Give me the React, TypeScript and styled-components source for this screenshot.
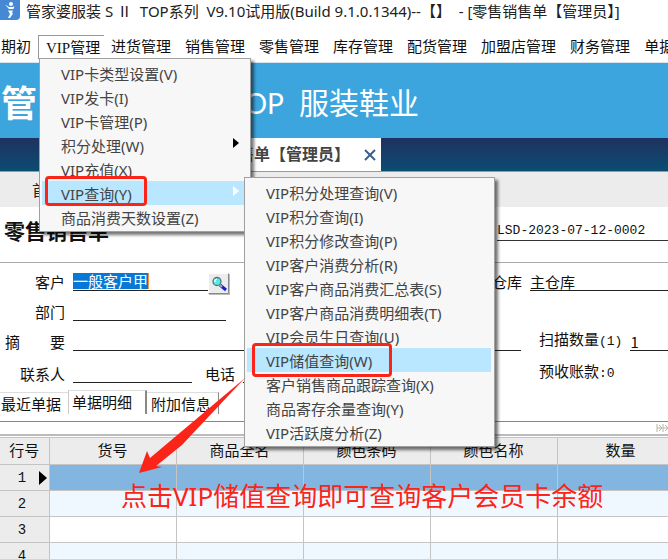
import React from "react";
import styled, { createGlobalStyle, css } from "styled-components";

const ui = `"Noto Sans", "Noto Sans CJK SC", sans-serif`;
const cjk = `"Noto Sans CJK SC", sans-serif`;
const mono = `"Liberation Mono", "Noto Sans CJK SC", monospace`;

const GlobalStyle = createGlobalStyle`
  * { box-sizing: border-box; }
  body { margin: 0; background: #fff; color: #111; overflow: hidden; font: 15px/18px ${cjk}; }
  button, input { font: inherit; color: inherit; border: 0; padding: 0; background: none; }
`;

const Window = styled.div`
  position: relative;
  min-height: 100vh;
  white-space: nowrap;
`;

const TitleBar = styled.header`
  display: flex;
  gap: 6px;
  height: 34px;
  font: 15px/22px ${ui};
  color: #222;
`;

const TitleText = styled.span`
  white-space: pre;
`;

const MenuBar = styled.nav`
  display: flex;
  height: 29px;
  border-bottom: 1px solid #d5e6f2;
`;

const MenuEntry = styled.div`
  position: relative;
  margin-top: 1px;
  &:first-child { margin-left: -6px; }
`;

const MenuButton = styled.button<{ $open?: boolean }>`
  height: 24px;
  padding: 0 7px 3px;
  line-height: 20px;
  border-top: 1px solid transparent;
  ${(p) =>
    p.$open &&
    css`
      width: 66px;
      padding: 0 0 0 7px;
      text-align: left;
      font-family: "Liberation Serif", "Noto Sans CJK SC", serif;
      border-top-color: #999;
      border-left: 1px solid #999;
    `}
`;

const Menu = styled.div<{ $sub?: boolean }>`
  position: absolute;
  z-index: ${(p) => (p.$sub ? 3 : 2)};
  top: ${(p) => (p.$sub ? "-4px" : "23px")};
  left: ${(p) => (p.$sub ? "202px" : "1px")};
  width: ${(p) => (p.$sub ? "251px" : "212px")};
  padding: 2px 3px 2px 2px;
  border: 1px solid #a0a0a0;
  background: #f7f7f7;
  box-shadow: 3px 3px 3px rgba(0, 0, 0, 0.55);
`;

const MenuRow = styled.div`
  position: relative;
`;

const MenuItem = styled.button<{ $active?: boolean }>`
  display: flex;
  justify-content: space-between;
  width: 100%;
  height: 24px;
  padding: 2px 8px 0 19px;
  font: 15px/22px ${ui};
  color: #444;
  background: ${(p) => (p.$active ? "#b8e7ff" : "transparent")};
`;

const Mark = styled.div<{ $width: number; $height: number; $left: number }>`
  position: absolute;
  z-index: 1;
  top: -5px;
  left: ${(p) => p.$left}px;
  width: ${(p) => p.$width}px;
  height: ${(p) => p.$height}px;
  border: 3px solid #fb2418;
  border-radius: 4px;
  pointer-events: none;
`;

const Banner = styled.div`
  display: flex;
  align-items: center;
  height: 75px;
  background: #3ca5de;
  color: #fff;
`;

const Brand = styled.strong`
  width: 229px;
  padding-left: 1px;
  font-size: 36px;
  line-height: 40px;
`;

const Edition = styled.span`
  font: 28px/40px Lato, sans-serif;
  width: 70px;
  padding-top: 5px;
`;

const Product = styled.span`
  font-size: 30px;
  line-height: 40px;
`;

const DocTabs = styled.div`
  display: flex;
  height: 34px;
  padding-left: 150px;
  background: linear-gradient(#1e3260, #0c4c72);
  border-bottom: 1px solid #999;
`;

const DocTab = styled.div`
  display: flex;
  align-items: center;
  justify-content: flex-end;
  gap: 14px;
  width: 231px;
  padding-right: 5px;
  padding-bottom: 3px;
  background: #fff;
  color: #444;
  font-size: 16px;
  font-weight: 700;
`;

const CloseButton = styled.button`
  display: flex;
  padding-top: 4px;
`;

const Toolbar = styled.div`
  display: flex;
  height: 35px;
  padding-left: 32px;
  background: #ececec;
  color: #222;
`;

const DocHeader = styled.div`
  display: flex;
  height: 56px;
  padding-top: 12px;
  border-bottom: 1px solid #aaa;
`;

const DocTitle = styled.h1`
  width: 497px;
  margin: 0;
  padding-left: 4px;
  font-size: 21px;
  line-height: 22px;
`;

const DocNumber = styled.div`
  flex: 1;
  height: 22px;
  border-bottom: 1px solid #333;
  font: 13px/24px ${mono};
`;

const Form = styled.form`
  display: grid;
  gap: 8px;
  padding: 6px 0 8px;
`;

const FormRow = styled.div`
  display: grid;
  grid-template-columns: 492px 1fr;
  height: 22px;
  &:last-child { height: 24px; }
`;

const Cell = styled.div<{ $indent?: boolean }>`
  display: flex;
  align-items: flex-end;
  min-width: 0;
  padding-left: ${(p) => (p.$indent ? "47px" : "0")};
`;

const Label = styled.label<{ $lead?: boolean; $gap?: number }>`
  flex: none;
  width: ${(p) => (p.$lead ? "65px" : "auto")};
  margin-right: 8px;
  margin-left: ${(p) => p.$gap ?? 0}px;
  text-align: right;
  white-space: pre;
`;

const Field = styled.input<{ $width?: number }>`
  flex: ${(p) => (p.$width ? "none" : "1")};
  width: ${(p) => (p.$width ? `${p.$width}px` : "auto")};
  min-width: 0;
  height: 18px;
  border-bottom: 1px solid #222;
  outline: 0;
`;

const PickerField = styled.div`
  width: 135px;
  height: 18px;
  border-bottom: 1px solid #222;
`;

const SelectedInput = styled.input`
  display: block;
  width: 76px;
  height: 16px;
  background: #0878d7;
  color: #fff;
  border-right: 1px solid #f09040;
  outline: 0;
`;

const PickerButton = styled.button`
  width: 21px;
  height: 21px;
  margin-bottom: -3px;
  background: #ececec;
  border: 1px solid;
  border-color: #fff #888 #888 #fff;
  box-shadow: 1px 1px 0 #bbb;
`;

const Small = styled.span`
  font-family: ${mono};
  font-size: 13px;
`;

const DetailTabs = styled.div`
  display: flex;
  align-items: flex-end;
  height: 31px;
  padding-bottom: 7px;
  border-bottom: 1px solid #888;
`;

const DetailTab = styled.button<{ $active?: boolean }>`
  height: ${(p) => (p.$active ? "24px" : "22px")};
  width: ${(p) => (p.$active ? "79px" : "68px")};
  padding: 0 0 ${(p) => (p.$active ? "2px" : "0")} ${(p) => (p.$active ? "3px" : "1px")};
  text-align: left;
  border-top: 1px solid #ddd;
  border-left: ${(p) => (p.$active ? "1px solid #ccc" : "0")};
  border-right: ${(p) => (p.$active ? "2px solid #888" : "0")};
  &:last-child { width: 72px; padding-left: 4px; border-right: 1px solid #888; }
`;

const Splitter = styled.div`
  display: flex;
  align-items: center;
  justify-content: flex-end;
  height: 14px;
  border-bottom: 2px solid #bbb;
`;

const GridPane = styled.div`
  position: relative;
  padding-top: 1px;
`;

const DataGrid = styled.table`
  width: 684px;
  table-layout: fixed;
  border-collapse: collapse;
  th, td {
    height: 26px;
    padding: 0;
    border: solid #c4c4c4;
    border-width: 1px 1px 1px 0;
    font-weight: 400;
  }
  thead th { height: 27px; background: #ececec; padding-bottom: 2px; }
`;

const RowHead = styled.th`
  background: #ececec;
  font: 14px/18px ${mono};
`;

const RowHeadInner = styled.div`
  display: grid;
  grid-template-columns: 34px 1fr;
  align-items: center;
  padding-left: 5px;
`;

const DataRow = styled.tr<{ $selected?: boolean; $odd?: boolean }>`
  td { background: ${(p) => (p.$selected ? "#83b5e1" : p.$odd ? "#fff" : "#f0f8ff")}; }
`;

const Note = styled.p`
  position: absolute;
  top: 43px;
  left: 121px;
  margin: 0;
  font: 26px/34px ${ui};
  color: #fb2418;
`;

const Arrow = styled.svg`
  position: absolute;
  top: -58px;
  left: 138px;
`;

const AppIcon = () => (
  <svg width="20" height="21" viewBox="0 0 20 21" aria-hidden="true">
    <rect x="-3" y="-3" width="23" height="23" rx="4" fill="#4589d5" />
    <circle cx="11" cy="4" r="2" fill="#fff" />
    <path d="M5 4.500l4 2.500h4l1.500-1-1 3H9zM8 10.500h5l-1 2 1 1-3 4.500H8l2-4z" fill="#fff" />
  </svg>
);

const Caret = ({ light }: { light?: boolean }) => (
  <svg width="6" height="10" viewBox="0 0 6 10" aria-hidden="true">
    <path d="M0 0v10l6-5z" fill={light ? "#fff" : "#000"} />
  </svg>
);

const CaretBox = styled.span`
  display: flex;
  align-items: center;
  height: 16px;
`;

const Magnifier = () => (
  <svg width="19" height="19" viewBox="0 0 19 19" aria-hidden="true">
    <path d="M11 11l6 5" stroke="#1420d8" strokeWidth="3" />
    <path d="M10 10l3 3" stroke="#a9a9a9" strokeWidth="2" />
    <circle cx="8" cy="7.500" r="4" fill="#58e8e8" stroke="#507878" strokeWidth="1.300" />
    <path d="M6 8V6l2-1" stroke="#fff" strokeWidth="1.300" fill="none" />
  </svg>
);

const vipItems = ["VIP卡类型设置(V)", "VIP发卡(I)", "VIP卡管理(P)", "积分处理(W)", "VIP充值(X)", "VIP查询(Y)", "商品消费天数设置(Z)"];
const queryItems = [
  "VIP积分处理查询(V)", "VIP积分查询(I)", "VIP积分修改查询(P)", "VIP客户消费分析(R)",
  "VIP客户商品消费汇总表(S)", "VIP客户商品消费明细表(T)", "VIP会员生日查询(U)", "VIP储值查询(W)",
  "客户销售商品跟踪查询(X)", "商品寄存余量查询(Y)", "VIP活跃度分析(Z)",
];
const menus = ["期初", "VIP管理", "进货管理", "销售管理", "零售管理", "库存管理", "配货管理", "加盟店管理", "财务管理", "单据"];
const columns = ["货号", "商品全名", "颜色条码", "颜色名称", "数量"];

const QueryMenu = () => (
  <Menu $sub>
    {queryItems.map((text, i) => (
      <MenuRow key={text}>
        <MenuItem $active={i === 7}>{text}</MenuItem>
        {i === 7 && <Mark $left={5} $width={140} $height={34} />}
      </MenuRow>
    ))}
  </Menu>
);

const VipMenu = () => (
  <Menu>
    {vipItems.map((text, i) => (
      <MenuRow key={text}>
        <MenuItem $active={i === 5}>
          {text}
          {(i === 3 || i === 5) && <CaretBox><Caret light={i === 5} /></CaretBox>}
        </MenuItem>
        {i === 5 && <Mark $left={3} $width={102} $height={30} />}
        {i === 5 && <QueryMenu />}
      </MenuRow>
    ))}
  </Menu>
);

export default function App() {
  return (
    <Window>
      <GlobalStyle />
      <TitleBar>
        <AppIcon />
        <TitleText>管家婆服装 S Ⅱ  TOP系列  V9.10试用版(Build 9.1.0.1344)--【】  - [零售销售单【管理员】]</TitleText>
      </TitleBar>
      <MenuBar>
        {menus.map((name, i) => (
          <MenuEntry key={name}>
            <MenuButton $open={i === 1}>{name}</MenuButton>
            {i === 1 && <VipMenu />}
          </MenuEntry>
        ))}
      </MenuBar>
      <Banner>
        <Brand>管家婆</Brand>
        <Edition>TOP</Edition>
        <Product>服装鞋业</Product>
      </Banner>
      <DocTabs>
        <DocTab>
          零售销售单【管理员】
          <CloseButton aria-label="关闭">
            <svg width="12" height="12" viewBox="0 0 12 12">
              <path d="M1 1l10 10M11 1L1 11" stroke="#38608a" strokeWidth="2" />
            </svg>
          </CloseButton>
        </DocTab>
      </DocTabs>
      <Toolbar><button>首张</button></Toolbar>
      <DocHeader>
        <DocTitle>零售销售单</DocTitle>
        <DocNumber>LSD-2023-07-12-0002</DocNumber>
      </DocHeader>
      <Form>
        <FormRow>
          <Cell>
            <Label $lead htmlFor="customer">客户</Label>
            <PickerField><SelectedInput id="customer" defaultValue="一般客户甲" /></PickerField>
            <PickerButton type="button" aria-label="查找客户"><Magnifier /></PickerButton>
          </Cell>
          <Cell>
            <Label htmlFor="store">仓库</Label>
            <Field id="store" defaultValue="主仓库" />
          </Cell>
        </FormRow>
        <FormRow>
          <Cell>
            <Label $lead htmlFor="dept">部门</Label>
            <Field id="dept" $width={153} />
          </Cell>
        </FormRow>
        <FormRow>
          <Cell>
            <Label $lead htmlFor="memo">{"摘\u3000\u3000要"}</Label>
            <Field id="memo" $width={448} />
          </Cell>
          <Cell $indent>
            <Label htmlFor="scan">扫描数量<Small>(1)</Small></Label>
            <Field id="scan" defaultValue="1" />
          </Cell>
        </FormRow>
        <FormRow>
          <Cell>
            <Label $lead htmlFor="contact">联系人</Label>
            <Field id="contact" $width={119} />
            <Label $gap={13} htmlFor="phone">电话</Label>
            <Field id="phone" $width={153} />
          </Cell>
          <Cell $indent><span>预收账款<Small>:0</Small></span></Cell>
        </FormRow>
      </Form>
      <DetailTabs>
        <DetailTab>最近单据</DetailTab>
        <DetailTab $active>单据明细</DetailTab>
        <DetailTab>附加信息</DetailTab>
      </DetailTabs>
      <Splitter>
        <svg width="12" height="8" viewBox="0 0 12 8" aria-hidden="true">
          <path d="M1 0v8M1 4h4M3 1l3 3-3 3M7 0v8M7 4h4M9 1l3 3-3 3" stroke="#bbb5a5" fill="none" />
        </svg>
      </Splitter>
      <GridPane>
        <DataGrid>
          <colgroup>
            <col width="49" />
            {columns.map((c) => <col key={c} width="127" />)}
          </colgroup>
          <thead>
            <tr>
              <th>行号</th>
              {columns.map((c) => <th key={c}>{c}</th>)}
            </tr>
          </thead>
          <tbody>
            {[1, 2, 3, 4].map((n) => (
              <DataRow key={n} $selected={n === 1} $odd={n % 2 === 1}>
                <RowHead scope="row">
                  <RowHeadInner>
                    {n}
                    {n === 1 && (
                      <svg width="8" height="14" viewBox="0 0 8 14" aria-hidden="true"><path d="M0 0v14l8-7z" /></svg>
                    )}
                  </RowHeadInner>
                </RowHead>
                {columns.map((c) => <td key={c} />)}
              </DataRow>
            ))}
          </tbody>
        </DataGrid>
        <Arrow width="108" height="97" viewBox="0 0 108 97" aria-hidden="true">
          <path d="M1 95L9 73l3 7L107 0 44 67 18 88l6 1z" fill="#fb2418" />
        </Arrow>
        <Note>点击VIP储值查询即可查询客户会员卡余额</Note>
      </GridPane>
    </Window>
  );
}
